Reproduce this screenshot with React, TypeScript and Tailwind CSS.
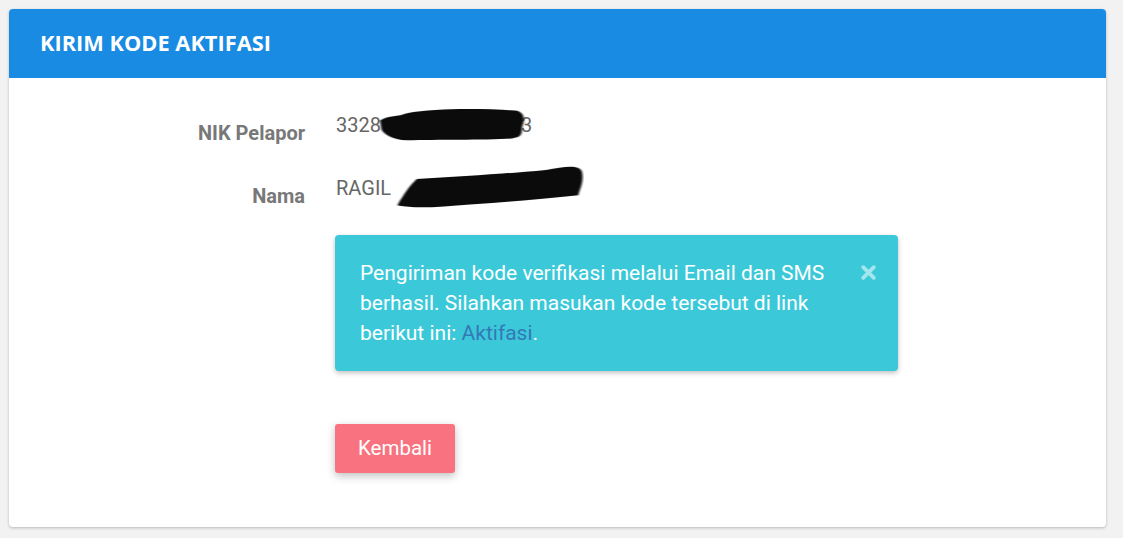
import * as React from 'react';

function Blob({ className, d }: { className: string; d: string }) {
  return (
    <svg className={className} viewBox="0 0 100 40" preserveAspectRatio="none" aria-hidden="true">
      <path d={d} fill="#0b0b0b" style={{ filter: 'blur(0.6px)' }} />
    </svg>
  );
}

export default function App() {
  return (
    <div className="min-h-[538px] bg-[#f2f2f2] pl-[9px] pr-[17px] pt-[9px] pb-[11px] font-['Roboto',sans-serif]">
      <div className="overflow-hidden rounded-[4px] bg-white shadow-[0_1px_3px_rgba(0,0,0,0.25)]">
        <div className="flex h-[69px] items-center bg-[#1a8be3] px-[31px]">
          <h1 className="font-['Open_Sans',sans-serif] text-[21.8px] font-bold text-white">
            KIRIM KODE AKTIFASI
          </h1>
        </div>

        <div className="pt-[35px] pb-[54px]">
          <div className="flex items-start">
            <div className="w-[296px] pt-[8px] text-right text-[20px] leading-[24px] font-bold text-[#787878]">NIK Pelapor</div>
            <div className="relative ml-[31px] text-[20px] leading-[24px] text-[#666]">
              <span>3328</span>
              <span className="relative inline-block h-[20px] w-[140px] align-middle">
                <Blob
                  className="absolute left-[-4px] top-[-11px] h-[36px] w-[150px]"
                  d="M2 16 C8 10 14 12 20 8 C40 2 70 3 92 5 C98 6 99 14 97 22 C96 30 98 34 90 36 C70 38 40 37 20 38 C10 38 4 30 3 26 Z"
                />
              </span>
              <span>3</span>
            </div>
          </div>

          <div className="mt-[31px] flex items-start">
            <div className="w-[296px] pt-[8px] text-right text-[20px] leading-[24px] font-bold text-[#787878]">Nama</div>
            <div className="relative ml-[31px] text-[20px] leading-[24px] text-[#666]">
              <span>RAGIL </span>
              <span className="relative inline-block h-[20px] w-[188px] align-middle">
                <Blob
                  className="absolute left-[-2px] top-[-17px] h-[46px] w-[190px]"
                  d="M2 36 C5 28 8 20 12 14 C35 12 60 9 80 6 C90 3 98 1 99 8 C100 16 98 22 97 28 C80 31 60 34 40 36 C25 38 12 40 2 37 Z"
                />
              </span>
            </div>
          </div>

          <div className="ml-[326px] mt-[27px] w-[563px] rounded-[4px] bg-[#3bc9d9] px-[25px] pt-[23px] pb-[23px] shadow-[0_2px_5px_rgba(0,0,0,0.25)]">
            <div className="flex items-start justify-between">
              <p className="w-[470px] text-[21px] leading-[30px] text-white">
                Pengiriman kode verifikasi melalui Email dan SMS berhasil. Silahkan masukan kode tersebut di link berikut ini:{' '}
                <a className="text-[#3479b7]">Aktifasi</a>.
              </p>
              <button className="mr-[-4px] mt-[6px] text-[#a3e6ee]" aria-label="close">
                <svg width="17" height="17" viewBox="0 0 16 16">
                  <path d="M3 3 L13 13 M13 3 L3 13" stroke="currentColor" strokeWidth="3.6" strokeLinecap="round" />
                </svg>
              </button>
            </div>
          </div>

          <button className="ml-[326px] mt-[53px] h-[49px] w-[120px] rounded-[3px] bg-[#f8737f] text-[20.5px] text-white shadow-[0_3px_8px_rgba(0,0,0,0.25)]">
            Kembali
          </button>
        </div>
      </div>
    </div>
  );
}
